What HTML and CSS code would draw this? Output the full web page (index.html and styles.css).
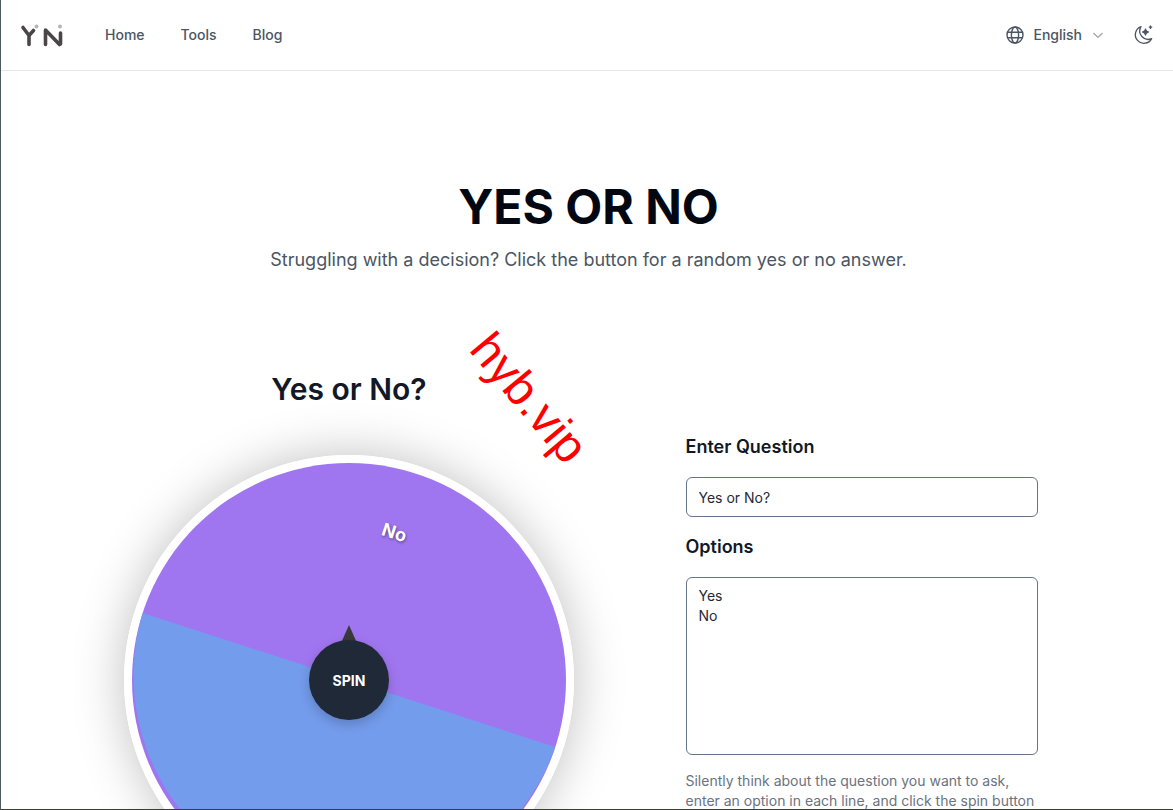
FILE: index.html
```html
<!DOCTYPE html>
<html lang="en">
<head>
  <meta charset="UTF-8">
  <meta name="viewport" content="width=device-width, initial-scale=1.0">
  <title>Yes or No</title>
  <link rel="stylesheet" href="styles.css">
</head>
<body>

  <header class="site-header">
    <a class="logo" href="#" aria-label="YN">
      <svg width="46" height="26" viewBox="18 20 46 26">
        <g fill="none" stroke="#4a4648" stroke-width="3.6" stroke-linecap="round" stroke-linejoin="round">
          <path d="M22 25.5 28 33.5V42.5M28 33.5 32.5 28.5"/>
          <path d="M44.5 42.5V28L58.5 42.5M59.5 42V31"/>
        </g>
        <circle cx="35.5" cy="24.5" r="2" fill="#b4b8b2"/>
        <circle cx="59" cy="24.5" r="2" fill="#b4b8b2"/>
      </svg>
    </a>
    <nav class="main-nav">
      <a href="#">Home</a>
      <a href="#">Tools</a>
      <a href="#">Blog</a>
    </nav>
    <div class="header-right">
      <button class="lang-button">
        <svg class="globe-icon" width="18" height="18" viewBox="0 0 18 18" fill="none" stroke="#4b5563" stroke-width="1.4">
          <circle cx="9" cy="9" r="8"/>
          <ellipse cx="9" cy="9" rx="3.6" ry="8"/>
          <path d="M1.6 6.2H16.4M1.6 11.8H16.4"/>
        </svg>
        English
        <svg class="chevron-icon" width="12" height="12" viewBox="0 0 12 12" fill="none" stroke="#9ca3af" stroke-width="1.2">
          <path d="M1.5 4 6 8.5 10.5 4"/>
        </svg>
      </button>
      <button class="theme-button" aria-label="Toggle theme">
        <svg width="22" height="22" viewBox="0 0 22 22" fill="none" stroke="#4b5563" stroke-width="1.3" stroke-linejoin="round">
          <path d="M9 2.6A8.6 8.6 0 1 0 19.6 14.6 8.4 8.4 0 0 1 9 2.6Z"/>
          <path d="M13.5 5.2C13.8 7.2 14.3 7.7 16.3 8 14.3 8.3 13.8 8.8 13.5 10.8 13.2 8.8 12.7 8.3 10.7 8 12.7 7.7 13.2 7.2 13.5 5.2Z" fill="#4b5563"/>
          <path d="M18.5 1.5V5M16.8 3.2H20.2"/>
        </svg>
      </button>
    </div>
  </header>

  <main class="page">
    <section class="hero">
      <h1 class="hero-title">YES OR NO</h1>
      <p class="hero-text">Struggling with a decision? Click the button for a random yes or no answer.</p>
    </section>

    <section class="tool">
      <div class="wheel-side">
        <h2 class="wheel-title">Yes or No?</h2>
        <div class="wheel">
          <svg class="wheel-face" width="434" height="434" viewBox="-217 -217 434 434">
            <circle r="217" fill="#a076f0"/>
            <path d="M206.3 67.1A217 217 0 0 1 -206.3 -67.1Z" fill="#749cec"/>
          </svg>
          <span class="wheel-label label-no">No</span>
          <span class="wheel-label label-yes">Yes</span>
          <span class="wheel-pointer"></span>
          <button class="spin-button">SPIN</button>
        </div>
      </div>

      <form class="options-form">
        <label class="form-label" for="question">Enter Question</label>
        <input class="form-input" id="question" type="text" value="Yes or No?">
        <label class="form-label" for="options">Options</label>
        <textarea class="form-textarea" id="options">Yes
No</textarea>
        <p class="form-help">Silently think about the question you want to ask, enter an option in each line, and click the spin button</p>
      </form>
    </section>
  </main>

  <div class="watermark">hyb.vip</div>

</body>
</html>
```

FILE: styles.css
```css
* {
  box-sizing: border-box;
}

html,
body {
  height: 100vh;
  overflow: hidden;
}

body {
  margin: 0;
  background-color: white;
  border-left: 1px solid #4d5a60;
  border-bottom: 1px solid #3a3d34;
  font-family: Inter, "Liberation Sans", sans-serif;
  color: #111827;
}

a {
  color: inherit;
  text-decoration: none;
}

button {
  background-color: transparent;
  border: none;
  padding: 0;
  font-family: inherit;
  cursor: pointer;
}

.site-header {
  display: flex;
  align-items: center;
  height: 71px;
  padding: 0 19px 1px 18px;
  border-bottom: 1px solid #e5e7eb;
}

.logo {
  display: flex;
  width: 46px;
}

.main-nav {
  display: flex;
  gap: 36px;
  margin-left: 40px;
  font-size: 14px;
  font-weight: 500;
  color: #4b5563;
}

.header-right {
  display: flex;
  align-items: center;
  margin-left: auto;
}

.lang-button {
  display: flex;
  align-items: center;
  font-size: 14px;
  font-weight: 500;
  color: #4b5563;
}

.globe-icon {
  margin-right: 9px;
}

.chevron-icon {
  margin-left: 10px;
}

.theme-button {
  display: flex;
  margin-left: 28px;
}

.page {
  padding: 112px 0 0 3px;
}

.hero {
  text-align: center;
}

.hero-title {
  margin: 0;
  font-size: 48px;
  font-weight: 700;
  line-height: 48px;
  color: #030712;
}

.hero-text {
  margin: 15px 0 0;
  font-size: 18px;
  line-height: 28px;
  color: #4b5563;
}

.tool {
  display: flex;
  gap: 64px;
  width: 1024px;
  margin: 97px auto 0;
}

.wheel-side {
  display: flex;
  flex-direction: column;
  align-items: center;
  width: 545px;
}

.wheel-title {
  margin: 0 0 48px;
  font-size: 30px;
  font-weight: 600;
  line-height: 36px;
  color: #111827;
}

.wheel {
  position: relative;
  flex: none;
  width: 450px;
  height: 450px;
  border: 8px solid white;
  border-radius: 50%;
  box-shadow: 0 0 50px rgba(0, 0, 0, 0.25);
}

.wheel-face {
  display: block;
}

.wheel-label {
  position: absolute;
  font-size: 18px;
  font-weight: 700;
  color: white;
  text-shadow: 1px 1px 3px rgba(0, 0, 0, 0.45);
  transform: rotate(18deg);
}

.label-no {
  left: 250px;
  top: 59px;
}

.label-yes {
  left: 146px;
  top: 349px;
  transform: rotate(198deg);
}

.wheel-pointer {
  position: absolute;
  left: 209px;
  top: 162px;
  width: 16px;
  height: 18px;
  background-color: #3a3a3c;
  clip-path: polygon(50% 0, 100% 100%, 0 100%);
}

.spin-button {
  position: absolute;
  left: 177px;
  top: 177px;
  width: 80px;
  height: 80px;
  border-radius: 50%;
  background-color: #1f2937;
  color: white;
  font-size: 14px;
  font-weight: 700;
  box-shadow: 0 4px 12px rgba(0, 0, 0, 0.2);
}

.options-form {
  width: 352px;
  padding-top: 62px;
}

.form-label {
  display: block;
  margin-bottom: 16px;
  font-size: 18px;
  font-weight: 600;
  line-height: 28px;
  color: #111827;
}

.form-input,
.form-textarea {
  display: block;
  width: 100%;
  padding: 8px 12px;
  background-color: white;
  border: 1px solid #64748b;
  border-radius: 6px;
  font-family: inherit;
  font-size: 14px;
  line-height: 20px;
  color: #1f2937;
}

.form-input {
  height: 40px;
  margin-bottom: 16px;
}

.form-textarea {
  height: 178px;
  resize: none;
}

.form-help {
  margin: 16px 0 0;
  font-size: 14px;
  line-height: 20px;
  color: #6b7280;
}

.watermark {
  position: absolute;
  left: 453px;
  top: 370px;
  font-family: "Liberation Sans", Arial, sans-serif;
  font-size: 48px;
  line-height: 56px;
  color: #ff0000;
  transform: rotate(50deg);
}
```
